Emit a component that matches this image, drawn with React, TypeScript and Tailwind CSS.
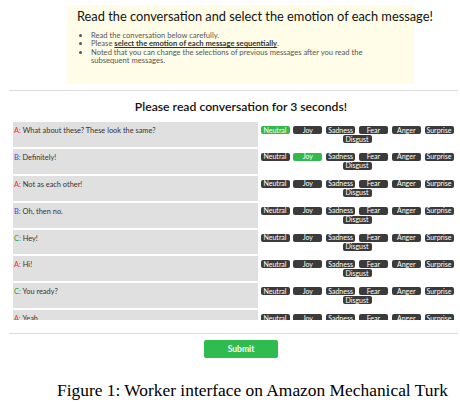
import React from 'react';

const EMOTIONS = ['Neutral', 'Joy', 'Sadness', 'Fear', 'Anger', 'Surprise'];

const MESSAGES = [
  { who: 'A', text: 'What about these? These look the same?', picked: 'Neutral' },
  { who: 'B', text: 'Definitely!', picked: 'Joy' },
  { who: 'A', text: 'Not as each other!' },
  { who: 'B', text: 'Oh, then no.' },
  { who: 'C', text: 'Hey!' },
  { who: 'A', text: 'Hi!' },
  { who: 'C', text: 'You ready?' },
  { who: 'A', text: 'Yeah.' },
];

const SPEAKER: Record<string, string> = {
  A: 'text-[#e8312c]',
  B: 'text-[#4646d8]',
  C: 'text-[#2f9a36]',
};

const Chip = ({ label, on }: { label: string; on?: boolean }) => (
  <span
    className={`inline-flex w-[29px] h-[8px] items-center justify-center rounded-[2px] text-[7px] leading-none text-white ${
      on ? 'bg-[#33b94b]' : 'bg-[#3b3b3b]'
    }`}
  >
    {label}
  </span>
);

export default function App() {
  return (
    <div className="w-[460px] h-[412px] bg-white overflow-hidden font-['Lato','Open_Sans',sans-serif] text-[#333]">
      {/* instructions */}
      <div className="ml-[67px] mt-[5px] w-[347px] h-[79px] bg-[#fffde8] pt-[3px] pl-[10px]">
        <h1 className="whitespace-nowrap text-[12.8px] leading-[16px] text-[#111]">
          Read the conversation and select the emotion of each message!
        </h1>
        <ul className="mt-[7px] ml-[14px] list-disc text-[7.6px] leading-[8.3px] text-[#555] pr-[30px]">
          <li>Read the conversation below carefully.</li>
          <li>
            Please <b className="underline text-[#333]">select the emotion of each message sequentially</b>.
          </li>
          <li>Noted that you can change the selections of previous messages after you read the subsequent messages.</li>
        </ul>
      </div>

      <div className="ml-[9px] mt-[6px] w-[449px] h-px bg-[#dddddd]" />

      <h2 className="mt-[8px] pl-[22px] text-center text-[12.2px] leading-[16px] font-semibold text-[#111]">
        Please read conversation for 3 seconds!
      </h2>

      {/* conversation */}
      <div className="mt-[7px] ml-[13px] h-[198px] overflow-hidden flex flex-col gap-[2px]">
        {MESSAGES.map((m, i) => (
          <div key={i} className="flex shrink-0 h-[24.9px]">
            <div className="w-[245px] bg-[#e0e0e0] pl-[1px] pt-[5px] text-[7.4px] leading-[8px]">
              <span className={SPEAKER[m.who]}>{m.who}:</span> {m.text}
            </div>
            <div className="w-[195px] pl-[3px] pt-[4px] flex flex-col items-center gap-[1px]">
              <div className="flex gap-[3.8px]">
                {EMOTIONS.map((e) => (
                  <Chip key={e} label={e} on={m.picked === e} />
                ))}
              </div>
              <Chip label="Disgust" />
            </div>
          </div>
        ))}
      </div>

      <div className="ml-[9px] mt-[13px] w-[449px] h-px bg-[#dddddd]" />

      <div className="mt-[6px] pl-[204px] flex">
        <button className="w-[74px] h-[18px] rounded-[2px] bg-[#2fbb4d] text-white text-[8.5px] font-bold leading-none">
          Submit
        </button>
      </div>

      <p className="mt-[22px] pl-[57px] whitespace-nowrap font-['Liberation_Serif',serif] text-[17.4px] leading-[20px] text-black">
        Figure 1: Worker interface on Amazon Mechanical Turk
      </p>
    </div>
  );
}
